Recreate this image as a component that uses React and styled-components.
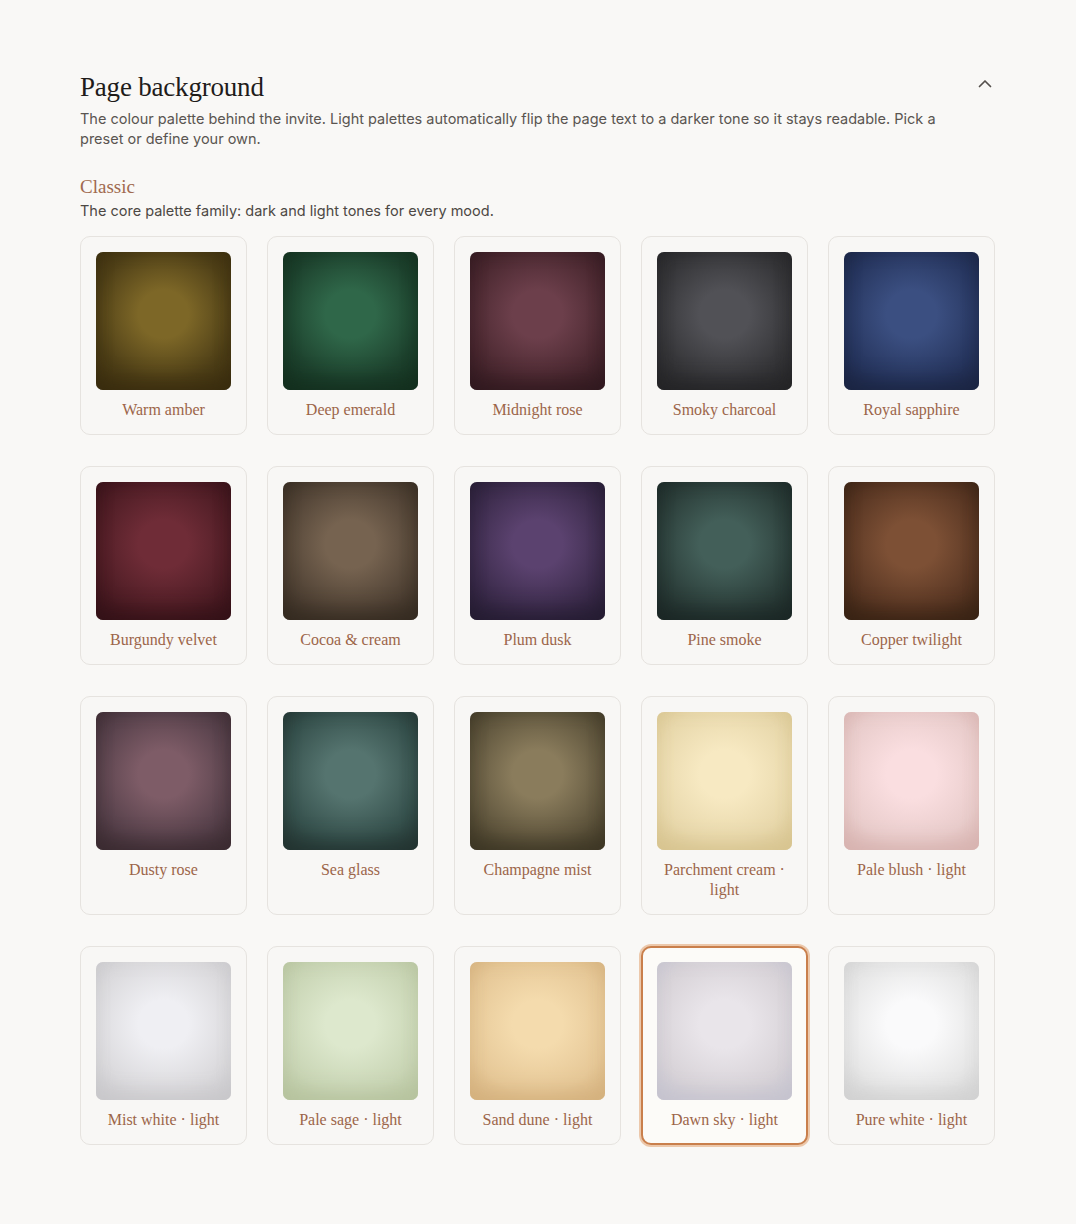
import React, { useState } from 'react'
import styled, { createGlobalStyle, css } from 'styled-components'

const GlobalStyle = createGlobalStyle`
  html, body {
    margin: 0;
    padding: 0;
    background: #f9f8f6;
  }
  body {
    font-family: Inter, "Liberation Sans", sans-serif;
    -webkit-font-smoothing: antialiased;
  }
`

const palettes = [
  { name: 'Warm amber', glow: '#7d6727', edge: '#4e3f17', deep: '#3a2d0f' },
  { name: 'Deep emerald', glow: '#2f6749', edge: '#1d412d', deep: '#14301f' },
  { name: 'Midnight rose', glow: '#6c3f4b', edge: '#4a2830', deep: '#321a20' },
  { name: 'Smoky charcoal', glow: '#515156', edge: '#353538', deep: '#252527' },
  { name: 'Royal sapphire', glow: '#3b4f81', edge: '#27365f', deep: '#1c2644' },
  { name: 'Burgundy velvet', glow: '#6f2c37', edge: '#4e1d25', deep: '#351218' },
  { name: 'Cocoa & cream', glow: '#766350', edge: '#504235', deep: '#362c22' },
  { name: 'Plum dusk', glow: '#5b426f', edge: '#3b2b4b', deep: '#261d33' },
  { name: 'Pine smoke', glow: '#435f59', edge: '#2b3d39', deep: '#1c2826' },
  { name: 'Copper twilight', glow: '#7d5035', edge: '#583623', deep: '#3a2415' },
  { name: 'Dusty rose', glow: '#7e5c67', edge: '#57414b', deep: '#3c2c32' },
  { name: 'Sea glass', glow: '#55746f', edge: '#36514d', deep: '#243532' },
  { name: 'Champagne mist', glow: '#8a7c5c', edge: '#5f553d', deep: '#3f3826' },
  { name: 'Parchment cream · light', glow: '#f7e9c2', edge: '#e8d8ac', deep: '#d8c591' },
  { name: 'Pale blush · light', glow: '#fadee0', edge: '#e9cdcc', deep: '#d8b4b1' },
  { name: 'Mist white · light', glow: '#efeff3', edge: '#dbdadd', deep: '#c9c8cb' },
  { name: 'Pale sage · light', glow: '#dde8cd', edge: '#c9d5b5', deep: '#b7c49f' },
  { name: 'Sand dune · light', glow: '#f4dbad', edge: '#e6c898', deep: '#d5b27f' },
  { name: 'Dawn sky · light', glow: '#e9e5ea', edge: '#d8d3d8', deep: '#c6c4cf' },
  { name: 'Pure white · light', glow: '#fafafb', edge: '#e6e6e6', deep: '#d2d2d2' },
]

const Page = styled.main`
  padding: 70px 81px 80px 80px;
`

const Header = styled.header`
  display: flex;
  align-items: flex-start;
  justify-content: space-between;
`

const Title = styled.h2`
  margin: 0;
  font-family: "Liberation Serif", "DejaVu Serif", serif;
  font-weight: 400;
  font-size: 27px;
  line-height: 35px;
  color: #1f1c1a;
  letter-spacing: -0.2px;
`

const Collapse = styled.button`
  display: flex;
  align-items: center;
  justify-content: center;
  width: 24px;
  height: 24px;
  margin: 2px -2px 0 0;
  padding: 0;
  border: 0;
  background: none;
  color: #55504c;
  cursor: pointer;
`

const Lead = styled.p`
  margin: 4px 0 0;
  max-width: 880px;
  font-size: 14.5px;
  line-height: 20px;
  color: #5a5551;
`

const Group = styled.section`
  margin-top: 26px;
`

const GroupTitle = styled.h3`
  margin: 0;
  font-family: "Liberation Serif", "DejaVu Serif", serif;
  font-weight: 400;
  font-size: 19px;
  line-height: 24px;
  color: #a06a4f;
`

const GroupNote = styled.p`
  margin: 2px 0 0;
  font-size: 14.5px;
  line-height: 20px;
  color: #4d4844;
`

const Grid = styled.div`
  margin-top: 15px;
  display: grid;
  grid-template-columns: repeat(5, 1fr);
  column-gap: 20px;
  row-gap: 31px;
`

const Card = styled.button`
  display: flex;
  flex-direction: column;
  align-items: stretch;
  justify-content: flex-start;
  padding: 15px 15px 14px;
  border: 1px solid #e6e3df;
  border-radius: 10px;
  background: #f8f7f5;
  cursor: pointer;
  text-align: center;
  font: inherit;

  ${p => p.$active && css`
    border: 2px solid #c97f4c;
    padding: 14px 14px 13px;
    background: #fcfbf8;
    box-shadow: 0 0 0 2px #ecc8ab;
  `}
`

const Swatch = styled.span`
  display: block;
  height: 138px;
  border-radius: 7px;
  background:
    radial-gradient(ellipse 62% 58% at 50% 45%, ${p => p.$glow} 0%, ${p => p.$glow} 30%, ${p => p.$edge} 85%, ${p => p.$deep} 120%);
  box-shadow: inset 0 -14px 24px -10px ${p => p.$deep}, inset 0 0 16px ${p => p.$deep}55;
`

const Label = styled.span`
  margin-top: 10px;
  font-family: "Liberation Serif", "DejaVu Serif", serif;
  font-size: 16px;
  line-height: 20px;
  color: #9c6549;
`

const ChevronUp = () => (
  <svg width='16' height='16' viewBox='0 0 16 16' fill='none'>
    <path d='M2.5 10.5L8 5l5.5 5.5' stroke='currentColor' strokeWidth='1.7' strokeLinecap='round' strokeLinejoin='round' />
  </svg>
)

const App = () => {
  const [selected, setSelected] = useState('Dawn sky · light')

  return (
    <>
      <GlobalStyle />
      <Page>
        <Header>
          <Title>Page background</Title>
          <Collapse aria-label='Collapse'>
            <ChevronUp />
          </Collapse>
        </Header>
        <Lead>
          The colour palette behind the invite. Light palettes automatically flip the page text to a
          darker tone so it stays readable. Pick a preset or define your own.
        </Lead>

        <Group>
          <GroupTitle>Classic</GroupTitle>
          <GroupNote>The core palette family: dark and light tones for every mood.</GroupNote>
          <Grid>
            {palettes.map(p => (
              <Card
                key={p.name}
                $active={selected === p.name}
                onClick={() => setSelected(p.name)}
              >
                <Swatch $glow={p.glow} $edge={p.edge} $deep={p.deep} />
                <Label>{p.name}</Label>
              </Card>
            ))}
          </Grid>
        </Group>
      </Page>
    </>
  )
}

export default App
